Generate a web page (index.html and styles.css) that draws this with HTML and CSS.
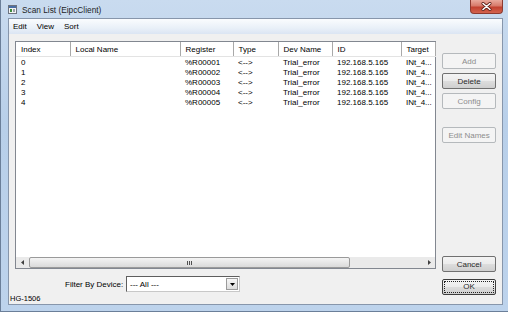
FILE: index.html
```html
<!DOCTYPE html>
<html lang="en">
<head>
  <meta charset="UTF-8">
  <title>Scan List (EipcClient)</title>
  <link rel="stylesheet" href="styles.css">
</head>
<body>
  <div class="window">
    <div class="titlebar">
      <svg class="app-icon" width="9" height="9" viewBox="0 0 9 9">
        <rect x="0.5" y="0.5" width="8" height="8" fill="#f4f4f4" stroke="#6d7480"/>
        <rect x="1" y="1" width="7" height="2" fill="#4a6fa5"/>
        <rect x="2" y="4" width="2" height="3" fill="#3d8c3d"/>
        <rect x="5" y="4" width="2" height="3" fill="#9aa0a8"/>
      </svg>
      <span class="title">Scan List (EipcClient)</span>
      <div class="close">
        <svg width="11" height="9" viewBox="0 0 11 9">
          <path d="M2 1.5 L9 7.5 M9 1.5 L2 7.5" stroke="#5a1c14" stroke-width="3" stroke-linecap="round"/>
          <path d="M2 1.5 L9 7.5 M9 1.5 L2 7.5" stroke="#ffffff" stroke-width="1.6" stroke-linecap="round"/>
        </svg>
      </div>
    </div>

    <div class="client">
      <div class="menubar">
        <span class="menu">Edit</span>
        <span class="menu">View</span>
        <span class="menu">Sort</span>
      </div>

      <div class="content">
        <div class="left">
          <div class="listview">
            <table class="scan-table">
              <colgroup>
                <col style="width:54px">
                <col style="width:110px">
                <col style="width:53px">
                <col style="width:45px">
                <col style="width:54px">
                <col style="width:69px">
                <col style="width:34px">
                <col>
              </colgroup>
              <thead>
                <tr>
                  <th>Index</th>
                  <th>Local Name</th>
                  <th>Register</th>
                  <th>Type</th>
                  <th>Dev Name</th>
                  <th>ID</th>
                  <th>Target</th>
                  <th class="filler"></th>
                </tr>
              </thead>
              <tbody>
                <tr><td>0</td><td></td><td>%R00001</td><td>&lt;--&gt;</td><td>Trial_error</td><td>192.168.5.165</td><td>INt_4...</td><td></td></tr>
                <tr><td>1</td><td></td><td>%R00002</td><td>&lt;--&gt;</td><td>Trial_error</td><td>192.168.5.165</td><td>INt_4...</td><td></td></tr>
                <tr><td>2</td><td></td><td>%R00003</td><td>&lt;--&gt;</td><td>Trial_error</td><td>192.168.5.165</td><td>INt_4...</td><td></td></tr>
                <tr><td>3</td><td></td><td>%R00004</td><td>&lt;--&gt;</td><td>Trial_error</td><td>192.168.5.165</td><td>INt_4...</td><td></td></tr>
                <tr><td>4</td><td></td><td>%R00005</td><td>&lt;--&gt;</td><td>Trial_error</td><td>192.168.5.165</td><td>INt_4...</td><td></td></tr>
              </tbody>
            </table>

            <div class="hscroll">
              <div class="arrow">
                <svg width="3" height="5" viewBox="0 0 3 5"><path d="M3 0 L0 2.5 L3 5 Z" fill="#404040"/></svg>
              </div>
              <div class="track">
                <div class="thumb">
                  <svg width="5" height="4" viewBox="0 0 5 4"><path d="M0.5 0 V4 M2.5 0 V4 M4.5 0 V4" stroke="#505050" stroke-width="1"/></svg>
                </div>
              </div>
              <div class="arrow">
                <svg width="3" height="5" viewBox="0 0 3 5"><path d="M0 0 L3 2.5 L0 5 Z" fill="#404040"/></svg>
              </div>
            </div>
          </div>

          <div class="filter">
            <span class="filter-label">Filter By Device:</span>
            <div class="combo">
              <span class="combo-text">--- All ---</span>
              <span class="combo-btn">
                <svg width="5" height="3" viewBox="0 0 5 3"><path d="M0 0 H5 L2.5 3 Z" fill="#000"/></svg>
              </span>
            </div>
          </div>
        </div>

        <div class="buttons">
          <button class="btn first" disabled>Add</button>
          <button class="btn">Delete</button>
          <button class="btn" disabled>Config</button>
          <button class="btn edit-names" disabled>Edit Names</button>
          <button class="btn cancel">Cancel</button>
          <button class="btn default"><span class="focus">OK</span></button>
        </div>
      </div>

      <div class="status">HG-1506</div>
    </div>
  </div>
</body>
</html>
```

FILE: styles.css
```css
body {
  margin: 0;
  overflow: hidden;
  font-family: "Liberation Sans", Arial, sans-serif;
  font-size: 8px;
  color: #000;
}

.window {
  width: 508px;
  height: 312px;
  box-sizing: border-box;
  padding: 0 5px 6px 7px;
  display: flex;
  flex-direction: column;
  background: linear-gradient(180deg, #c9dbef 0%, #b8cfe9 40%, #bdd3ec 100%);
  border-left: 1px solid #6b7f99;
  border-bottom: 1px solid #6b7f99;
}

.titlebar {
  height: 20px;
  display: flex;
  align-items: center;
  position: relative;
}

.app-icon {
  margin: 1px 5px 0 0;
}

.title {
  font-size: 8.3px;
  color: #1e1e1e;
  margin-top: 1px;
}

.close {
  position: absolute;
  right: 0;
  top: 0;
  width: 33px;
  height: 14px;
  box-sizing: border-box;
  border: 1px solid #8d3a30;
  border-top: none;
  border-radius: 0 0 4px 4px;
  background: linear-gradient(180deg, #e9a99c 0%, #d77a6a 45%, #c2412f 55%, #d3634e 100%);
  display: flex;
  align-items: center;
  justify-content: center;
}

.client {
  flex: 1;
  display: flex;
  flex-direction: column;
  background: #f0f0f0;
  border: 1px solid #8796ab;
  box-sizing: border-box;
}

.menubar {
  height: 15px;
  display: flex;
  align-items: center;
  padding-left: 4px;
  gap: 10px;
  background: linear-gradient(180deg, #fafcfe 0%, #e9f0f8 60%, #dbe5f3 100%);
}

.content {
  height: 260px;
  display: flex;
  gap: 6px;
  padding: 7px 6px 0 6px;
  box-sizing: border-box;
}

.left {
  width: 423px;
  display: flex;
  flex-direction: column;
}

.listview {
  height: 228px;
  box-sizing: border-box;
  border: 1px solid #828790;
  background: #fff;
  display: flex;
  flex-direction: column;
}

.scan-table {
  border-collapse: collapse;
  table-layout: fixed;
  width: 100%;
}

.scan-table th {
  height: 13px;
  padding: 1px 0 0 5px;
  font-weight: normal;
  text-align: left;
  white-space: nowrap;
  overflow: hidden;
  border-right: 1px solid #a9a9a9;
  border-bottom: 1px solid #e3e3e3;
  background: #fff;
}

.scan-table th.filler {
  border-right: none;
}

.scan-table td {
  height: 10px;
  padding: 0 0 0 5px;
  line-height: 10px;
  white-space: nowrap;
  overflow: hidden;
}

.scan-table tbody tr:first-child td {
  padding-top: 1px;
}

.hscroll {
  margin-top: auto;
  height: 11px;
  width: 419px;
  display: flex;
  background: #eaeaea;
}

.arrow {
  width: 12px;
  display: flex;
  align-items: center;
  justify-content: center;
}

.track {
  flex: 1;
  padding-left: 1px;
  display: flex;
}

.thumb {
  width: 321px;
  box-sizing: border-box;
  border: 1px solid #9a9a9a;
  border-radius: 2px;
  background: linear-gradient(180deg, #f4f4f4, #dadada);
  display: flex;
  align-items: center;
  justify-content: center;
}

.filter {
  margin-top: 7px;
  height: 16px;
  display: flex;
  align-items: center;
  padding-left: 50px;
}

.filter-label {
  width: 61px;
}

.combo {
  width: 114px;
  height: 16px;
  box-sizing: border-box;
  border: 1px solid;
  border-color: #5e5e5e #c8c8c8 #c8c8c8 #5e5e5e;
  background: #fff;
  display: flex;
  align-items: center;
}

.combo-text {
  flex: 1;
  padding-left: 3px;
}

.combo-btn {
  width: 12px;
  height: 12px;
  margin-right: 1px;
  box-sizing: border-box;
  border: 1px solid #9b9b9b;
  background: linear-gradient(180deg, #f6f6f6, #dcdcdc);
  display: flex;
  align-items: center;
  justify-content: center;
}

.buttons {
  width: 54px;
  display: flex;
  flex-direction: column;
  gap: 4px;
}

.btn {
  height: 16px;
  padding: 0;
  box-sizing: border-box;
  font-family: "Liberation Sans", Arial, sans-serif;
  font-size: 8px;
  font-weight: 400;
  color: #2a2a2a;
  border: 1px solid #707070;
  border-radius: 2px;
  background: linear-gradient(180deg, #f4f4f4 0%, #ebebeb 50%, #dddddd 51%, #cfcfcf 100%);
}

.btn:disabled {
  color: #8d8d8d;
  border-color: #b5b9bc;
  background: #f4f4f4;
}

.btn.first {
  margin-top: 12px;
}

.btn.edit-names {
  margin-top: 14px;
}

.btn.cancel {
  margin-top: auto;
}

.btn.default {
  margin-top: 3px;
  margin-bottom: -1px;
  border-color: #3c3c3c;
  display: flex;
  align-items: center;
  justify-content: center;
}

.focus {
  display: block;
  width: 48px;
  height: 10px;
  line-height: 10px;
  border: 1px dotted #222;
}

.status {
  height: 10px;
  line-height: 10px;
  font-size: 7.5px;
  padding-left: 1px;
}
```
